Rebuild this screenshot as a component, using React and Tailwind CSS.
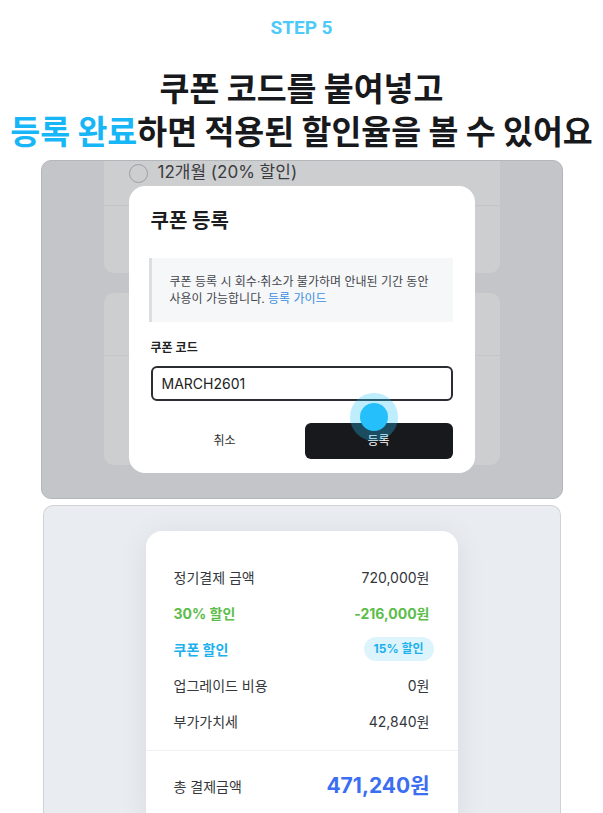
import React from "react";

const font = { fontFamily: '"Inter", "Noto Sans CJK KR", sans-serif' };

const rows = [
  { label: "정기결제 금액", value: "720,000원" },
  { label: "30% 할인", value: "-216,000원", tone: "green" },
  { label: "쿠폰 할인", badge: "15% 할인", tone: "blue" },
  { label: "업그레이드 비용", value: "0원" },
  { label: "부가가치세", value: "42,840원" },
];

const CouponModal = () => (
  <div className="absolute left-[87px] top-[25px] w-[346px] h-[287px] bg-white rounded-[16px] px-[22px] pt-[20px] flex flex-col">
    <h2 className="text-[20px] leading-[30px] font-bold text-[#1b1d20]">쿠폰 등록</h2>

    {/* 안내 박스 */}
    <div className="mt-[22px] -ml-[2px] w-[304px] h-[64px] bg-[#f6f7f9] border-l-[3px] border-[#dcdee2] pl-[18px] flex flex-col justify-center text-[12px] leading-[17px] text-[#45484d]">
      <p>쿠폰 등록 시 회수·취소가 불가하며 안내된 기간 동안</p>
      <p>
        사용이 가능합니다. <span className="text-[#3a8fe0]">등록 가이드</span>
      </p>
    </div>

    <label className="mt-[17px] text-[12px] leading-[18px] font-semibold text-[#222]">쿠폰 코드</label>
    <div className="mt-[9px] h-[35px] w-[302px] border-2 border-[#2a2d31] rounded-[6px] flex items-center px-[9px] text-[14px] text-[#222]">
      MARCH2601
    </div>

    {/* 버튼 */}
    <div className="mt-[22px] flex gap-[6px]">
      <button className="w-[148px] h-[36px] text-[12px] text-[#333]">취소</button>
      <button className="w-[148px] h-[36px] rounded-[6px] bg-[#17191c] text-[12px] text-white">등록</button>
    </div>
  </div>
);

const App = () => {
  return (
    <div className="w-[603px] h-[813px] overflow-hidden bg-white flex flex-col items-center" style={font}>
      <p className="pt-[14px] text-[19px] leading-[28px] font-bold text-[#4ccaf9]" style={{ fontFamily: 'Roboto, "Noto Sans CJK KR", sans-serif' }}>
        STEP 5
      </p>

      <h1 className="mt-[23px] text-center text-[32.5px] leading-[43px] font-bold text-[#17191c] whitespace-nowrap" style={{ fontFamily: '"Noto Sans CJK KR", sans-serif' }}>
        쿠폰 코드를 붙여넣고
        <br />
        <span className="text-[#17b6f7]">등록 완료</span>하면 적용된 할인율을 볼 수 있어요
      </h1>

      {/* 스크린샷 1: 쿠폰 등록 모달 */}
      <div className="relative mt-[9px] w-[522px] h-[339px] shrink-0 rounded-[10px] border border-[#b3b6bb] bg-[#c3c5c9] overflow-hidden">
        <div className="mx-auto w-[396px] flex flex-col gap-[20px]">
          <div className="h-[112px] rounded-b-[10px] bg-[#cdcecf]">
            <div className="h-[24px] flex items-center pl-[25px] gap-[10px]">
              <span className="w-[19px] h-[19px] rounded-full border-[1.5px] border-[#9d9fa2]" />
              <span className="text-[17px] text-[#3a3c3f]">12개월 (20% 할인)</span>
            </div>
            <div className="mt-[20px] border-t border-[#c4c5c7]" />
          </div>
          <div className="h-[172px] rounded-[10px] bg-[#cdcecf]">
            <div className="mt-[62px] border-t border-[#c4c5c7]" />
          </div>
        </div>

        <CouponModal />

        {/* 터치 표시 */}
        <div className="absolute left-[308px] top-[232px] w-[48px] h-[48px] rounded-full bg-[#29c3fb]/30 flex items-center justify-center">
          <div className="w-[28px] h-[28px] rounded-full bg-[#25c0fb]" />
        </div>
      </div>

      {/* 스크린샷 2: 결제 요약 */}
      <div className="mt-[6px] w-[518px] flex-1 shrink-0 rounded-t-[10px] border border-b-0 border-[#cfd2d7] bg-[#e9ecf0] flex justify-center pt-[25px]">
        <div className="w-[312px] bg-white rounded-t-[16px] shadow-[0_4px_30px_rgba(30,40,60,0.08)]">
          <div className="px-[28px] pt-[28px] pb-[11px]">
            {rows.map((r) => (
              <div key={r.label} className="h-[36px] flex items-center justify-between text-[14px]">
                <span
                  className={
                    r.tone === "green"
                      ? "font-bold text-[#5cbd4a]"
                      : r.tone === "blue"
                      ? "font-bold text-[#1cb1ee]"
                      : "text-[#34373b]"
                  }
                >
                  {r.label}
                </span>
                {r.badge ? (
                  <span className="-mr-[4px] h-[24px] px-[10px] rounded-full bg-[#def4fd] text-[12px] font-bold text-[#1cb1ee] flex items-center">
                    {r.badge}
                  </span>
                ) : (
                  <span className={r.tone === "green" ? "font-bold text-[#5cbd4a]" : "text-[#34373b]"}>{r.value}</span>
                )}
              </div>
            ))}
          </div>
          <div className="border-t border-[#eef0f2]" />
          <div className="h-[70px] px-[28px] flex items-center justify-between">
            <span className="text-[14px] text-[#34373b]">총 결제금액</span>
            <span className="text-[21px] font-bold text-[#3b6ef1]">471,240원</span>
          </div>
        </div>
      </div>
    </div>
  );
};

export default App;
